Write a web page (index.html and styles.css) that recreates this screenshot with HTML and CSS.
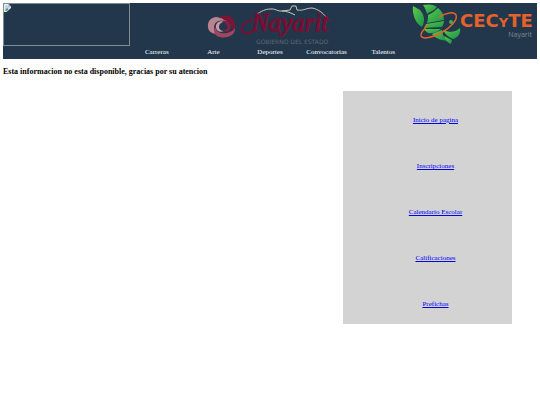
FILE: index.html
```html
<!DOCTYPE html>
<html lang="es">
<head>
  <meta charset="UTF-8">
  <meta name="viewport" content="width=device-width, initial-scale=1.0">
  <title>CECyTE Nayarit</title>
  <link rel="stylesheet" href="styles.css">
</head>
<body>

  <header class="header">
    <div class="logos">
      <div class="imagen">
        <svg class="imagen-icono" viewBox="0 0 14 16">
          <path d="M0 0h9l5 5v11H0z" fill="#e8eef0"/>
          <path d="M2 3h7l3 3v2L2 12z" fill="#b9d3ee"/>
          <path d="M2 13l4-5 3 3-4 3z" fill="#4f9d45"/>
          <path d="M9 0v5h5z" fill="#9aa5aa"/>
          <path d="M14 8L5 16h9z" fill="#22374b"/>
        </svg>
      </div>

      <svg class="logo" viewBox="3 0 122 43">
        <path d="M1 24C0 17 7 12 13 15C17 15 19 17 20 19C13 16 7 18 7 25C7 28 9 30 10 31C5 31 1 28 1 24z" fill="#b98491"/>
        <path d="M12 14C17 11 27 12 28 21C29 26 27 29 25 30C26 23 23 18 17 17C15 15 14 15 12 14z" fill="#7b1537"/>
        <path d="M28 25C29 32 20 36 13 34C7 33 6 28 8 24C10 30 15 31 20 30C24 29 27 27 28 25z" fill="#a24560"/>
        <path d="M9 25C8 20 13 17 18 19C14 19 12 21 12 24C12 27 15 28 17 28C13 30 10 28 9 25z" fill="#c79aa6"/>
        <path d="M15 18C21 16 25 21 23 26C22 29 19 29 16 28C20 27 21 25 20 22C19 20 17 19 15 18z" fill="#8c1d40"/>
        <path d="M49 12C54 8 59 6 63 6C68 5 71 9 75 8L83 7L85 3H89L90 7C97 8 99 5 105 5C111 6 116 10 119 14M75 8C80 8 84 10 88 12" fill="none" stroke="#c9c6bd" stroke-width="1"/>
        <path d="M49 17C42 16 35 21 35 26C35 31 41 32 46 28" fill="none" stroke="#7c0d32" stroke-width="2"/>
        <text class="nayarit" x="45" y="28">Nayarit</text>
        <text class="gobierno" x="49" y="41">GOBIERNO DEL ESTADO</text>
      </svg>

      <svg class="logo" viewBox="0 0 122 43">
        <defs>
          <linearGradient id="verde" x1="0" y1="0" x2="1" y2="1">
            <stop offset="0" stop-color="#62c94c"/>
            <stop offset="1" stop-color="#159447"/>
          </linearGradient>
        </defs>
        <g fill="url(#verde)">
          <path d="M1 3L8 7C13 13 13 18 10 24C3 20 0 11 1 3z"/>
          <path d="M11 2C16 1 21 1 25 4C22 8 17 9 15 11C14 7 13 5 11 2z"/>
          <path d="M16 12C20 10 23 8 26 5C30 8 32 12 32 17L15 20C16 17 16 15 16 12z"/>
          <path d="M14 21L32 18C32 20 31 22 30 24L12 25z"/>
          <path d="M11 26L29 26C25 30 20 31 16 30z"/>
          <path d="M20 31L30 27C30 31 32 34 35 38C28 37 23 35 20 31z"/>
          <path d="M31 27C38 30 44 29 48 25C49 30 46 35 41 36C36 34 33 31 31 27z"/>
          <path d="M32 33L40 37L39 41C36 40 33 37 32 33z"/>
        </g>
        <path d="M27 14C34 10 42 8 44 12C46 17 38 25 29 30C21 34 11 37 9 33C8 30 12 26 16 22" fill="none" stroke="#e5622c" stroke-width="1.5"/>
        <circle cx="39" cy="19" r="2" fill="#3bb34a"/>
        <text class="cecyte" x="48" y="24">CEC<tspan class="cecyte-y">Y</tspan>TE</text>
        <text class="estado" x="120" y="34" text-anchor="end">Nayarit</text>
      </svg>
    </div>

    <nav class="menu">
      <a href="#">Carreras</a>
      <a href="#">Arte</a>
      <a href="#">Deportes</a>
      <a href="#">Convocatorias</a>
      <a href="#">Talentos</a>
    </nav>
  </header>

  <h1 class="aviso">Esta informacion no esta disponible, gracias por su atencion</h1>

  <aside class="lateral">
    <ul class="enlaces">
      <li><a href="#">Inicio de pagina</a></li>
      <li><a href="#">Inscripciones</a></li>
      <li><a href="#">Calendario Escolar</a></li>
      <li><a href="#">Calificaciones</a></li>
      <li><a href="#">Prefichas</a></li>
    </ul>
  </aside>

</body>
</html>
```

FILE: styles.css
```css
body { font-family: "Liberation Serif", "Times New Roman", serif; background-color: #fff; margin: 3px; font-size: 7px; line-height: 8px; }

.header { background-color: #22374b; padding-bottom: 3px; }
.logos { display: flex; justify-content: space-between; padding-right: 3px; }
.imagen { box-sizing: border-box; width: 127px; height: 43px; border: 1px solid #818b93; }
.imagen-icono { display: block; width: 7px; height: 8px; }
.logo { display: block; width: 122px; height: 43px; overflow: visible; }

.nayarit { font-family: "Liberation Serif", serif; font-size: 25px; font-style: italic; fill: #7c0d32; stroke: #7c0d32; }
.gobierno { font-family: "DejaVu Sans", sans-serif; font-size: 6px; fill: #5f6870; }
.cecyte { font-family: "DejaVu Sans", sans-serif; font-size: 18px; font-weight: bold; fill: #e5622c; }
.cecyte-y { font-size: 13px; }
.estado { font-family: "Open Sans", sans-serif; font-size: 7px; fill: #7d8791; }

.menu { display: grid; grid-template-columns: repeat(5, 1fr); width: 53%; margin: 0 auto; padding-top: 2px; text-align: center; }
.menu a { color: #fff; text-decoration: none; }

.aviso { font-size: 8px; line-height: 10px; margin: 8px 0 14px; }

.lateral { box-sizing: border-box; width: 169px; max-width: 100%; margin-left: auto; margin-right: 25px; padding: 25px 0 16px 16px; background-color: #d3d3d3; }
.enlaces { display: flex; flex-direction: column; gap: 38px; list-style: none; margin: 0; padding: 0; text-align: center; }
.enlaces a { color: #0000ee; }
```
